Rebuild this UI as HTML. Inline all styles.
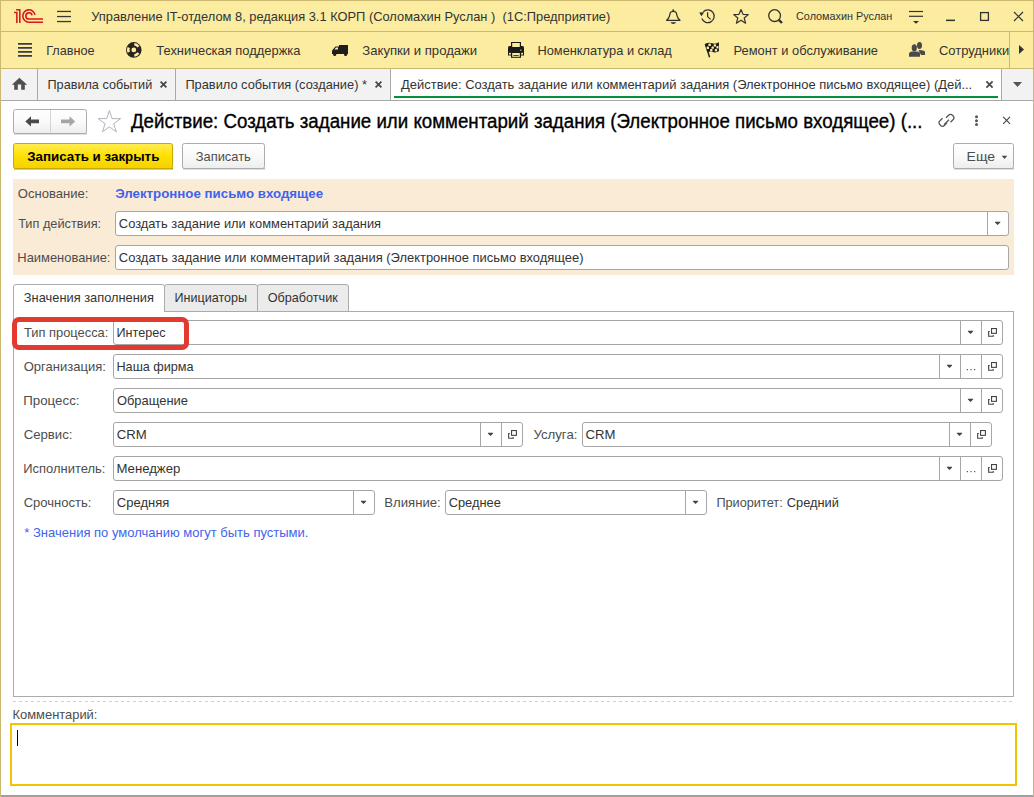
<!DOCTYPE html>
<html><head><meta charset="utf-8"><title>1C</title>
<style>
html,body{margin:0;padding:0;background:#fff;overflow:hidden;}
svg{display:block;font-family:"Liberation Sans", sans-serif;}
text{white-space:pre;}
</style></head>
<body>
<svg width="1034" height="797" viewBox="0 0 1034 797">
<rect x="0" y="0" width="1034" height="797" fill="#FFFFFF"/>
<rect x="0" y="0" width="1034" height="68" fill="#FBEC9F"/>
<rect x="0" y="31" width="1034" height="1" fill="#CBB871"/>
<rect x="0" y="68" width="1034" height="1" fill="#CBB871"/>
<rect x="0" y="69" width="1034" height="31" fill="#F2F2F2"/>
<rect x="0" y="100" width="1034" height="1" fill="#A9A9A9"/>
<g fill="none" stroke="#D8161C" stroke-width="1.55">
<path d="M14.1 12.55 H16.85 V22.9"/>
<path d="M16.1 9.75 H19.8 V22.9"/>
<path d="M43 22.15 H28.9 A6.15 6.15 0 1 1 35 14.9"/>
<path d="M43 19.05 H28.9 A3.1 3.1 0 1 1 32 15.4"/>
</g>
<g fill="#3A3A3A"><rect x="57" y="10.8" width="14" height="1.3"/><rect x="57" y="15.9" width="14" height="1.3"/><rect x="57" y="20.9" width="14" height="1.3"/></g>
<text x="91.21" y="21" font-size="13.5" fill="#333333" font-weight="normal" textLength="519.10" lengthAdjust="spacingAndGlyphs" xml:space="preserve" >Управление IT-отделом 8, редакция 3.1 КОРП (Соломахин Руслан )  (1С:Предприятие)</text>
<path d="M666.6 20.3 Q668.6 18.6 669.4 16.2 L670.3 12.8 Q670.8 11.4 673.3 11.4 Q675.8 11.4 676.3 12.8 L677.2 16.2 Q678 18.6 680 20.3 Z" fill="none" stroke="#2E2E2E" stroke-width="1.25" stroke-linejoin="round"/>
<circle cx="673.3" cy="10.2" r="0.95" fill="#2E2E2E"/>
<path d="M670.4 22.2 H676.2 Q675.2 23.9 673.3 23.9 Q671.4 23.9 670.4 22.2 Z" fill="#2E2E2E"/>
<g fill="none" stroke="#2E2E2E" stroke-width="1.25">
<path d="M703.3 11.7 A6.4 6.4 0 1 1 701.8 18.6"/>
<path d="M707.6 12.2 V16.6 L710.6 19.4"/>
</g>
<path d="M699.2 12.5 L704.2 12.3 L701.4 16.2 Z" fill="#2E2E2E"/>
<path d="M741 9.5 L743 14.3 L748.3 14.6 L744.2 18 L745.6 23.2 L741 20.3 L736.4 23.2 L737.8 18 L733.7 14.6 L739 14.3 Z" fill="none" stroke="#333" stroke-width="1.2" stroke-linejoin="round"/>
<circle cx="774.6" cy="15.6" r="5.9" fill="none" stroke="#333" stroke-width="1.3"/>
<path d="M778.8 19.8 L782 23" stroke="#333" stroke-width="2.4"/>
<text x="796.06" y="20" font-size="11" fill="#333333" font-weight="normal" textLength="96.27" lengthAdjust="spacingAndGlyphs" xml:space="preserve" >Соломахин Руслан</text>
<g fill="#333"><rect x="909" y="10.9" width="14" height="1.2"/><rect x="909" y="15.7" width="14" height="1.2"/>
<path d="M913 21 H919 L916 23.7 Z"/></g>
<rect x="946" y="19.6" width="9" height="1.5" fill="#333"/>
<rect x="980.6" y="12.6" width="7.8" height="7.8" fill="none" stroke="#333" stroke-width="1.3"/>
<path d="M1014 12 L1023 21 M1023 12 L1014 21" stroke="#333" stroke-width="1.2"/>
<g fill="#3A3A48"><rect x="18" y="43" width="14" height="1.75"/><rect x="18" y="47" width="14" height="1.75"/><rect x="18" y="51" width="14" height="1.75"/><rect x="18" y="55" width="14" height="1.75"/></g>
<text x="46.19" y="55" font-size="13.5" fill="#333333" font-weight="normal" textLength="48.39" lengthAdjust="spacingAndGlyphs" xml:space="preserve" >Главное</text>
<g transform="translate(133.8 49.9)">
<circle r="7.8" fill="#2A2320"/>
<circle r="2.4" fill="#FBEC9F"/>
<g fill="#FBEC9F">
<path d="M-6.25 -2.92 A6.9 6.9 0 0 0 -6.25 2.92 L-3.9 1.82 A4.3 4.3 0 0 1 -3.9 -1.82 Z"/>
<path d="M-6.25 -2.92 A6.9 6.9 0 0 0 -6.25 2.92 L-3.9 1.82 A4.3 4.3 0 0 1 -3.9 -1.82 Z" transform="rotate(120)"/>
<path d="M-6.25 -2.92 A6.9 6.9 0 0 0 -6.25 2.92 L-3.9 1.82 A4.3 4.3 0 0 1 -3.9 -1.82 Z" transform="rotate(240)"/>
</g></g>
<text x="156.34" y="55" font-size="13.5" fill="#333333" font-weight="normal" textLength="144.08" lengthAdjust="spacingAndGlyphs" xml:space="preserve" >Техническая поддержка</text>
<g fill="#1E1E1E">
<rect x="339" y="45" width="9" height="9"/>
<path d="M332 54 V50.5 L335.5 46.5 H339.5 V54 Z"/>
<circle cx="334.7" cy="54.5" r="1.6"/><circle cx="345.6" cy="54.5" r="1.6"/>
</g>
<path d="M334.3 49.5 L336 47.6 H338 V49.5 Z" fill="#FBEC9F"/>
<text x="362.34" y="55" font-size="13.5" fill="#333333" font-weight="normal" textLength="114.87" lengthAdjust="spacingAndGlyphs" xml:space="preserve" >Закупки и продажи</text>
<g fill="#1A1A1A">
<rect x="511" y="42" width="10" height="6"/>
<path d="M508 47.5 Q508 46 509.5 46 H522.5 Q524 46 524 47.5 V55.5 H508 Z"/>
<rect x="511" y="52" width="10" height="5.8"/>
</g>
<rect x="512.2" y="43" width="7.6" height="4" fill="#FBEC9F"/>
<rect x="512.2" y="53" width="7.6" height="3.8" fill="#FBEC9F"/>
<rect x="509" y="52.8" width="1.8" height="1.8" fill="#FBEC9F"/><rect x="521.2" y="52.8" width="1.8" height="1.8" fill="#FBEC9F"/>
<rect x="513.3" y="55" width="5.4" height="0.8" fill="#1A1A1A"/>
<rect x="520" y="49.5" width="1.5" height="1.5" fill="#9A9070"/>
<text x="537.48" y="55" font-size="13.5" fill="#333333" font-weight="normal" textLength="134.35" lengthAdjust="spacingAndGlyphs" xml:space="preserve" >Номенклатура и склад</text>
<g>
<path d="M705.1 44 Q708.5 41.8 712 43.3 Q715.5 44.6 718.9 42.3 V51.3 Q715.5 53.3 712.3 51.8 Q710 50.8 708.3 52.2 Z" fill="#1A1A1A"/>
<path d="M705.3 44 L709.6 57.3" stroke="#1A1A1A" stroke-width="1.4"/>
<g fill="#FBEC9F">
<rect x="708.4" y="43.5" width="2.5" height="2.5" rx="0.6"/><rect x="713.7" y="44.2" width="2.4" height="2.4" rx="0.6"/>
<rect x="706.7" y="46.6" width="2.3" height="2.5" rx="0.6"/><rect x="711.5" y="46.4" width="2.4" height="2.4" rx="0.6"/><rect x="716.4" y="46.1" width="2.1" height="2.4" rx="0.6"/>
<rect x="710.1" y="49.1" width="2.4" height="2.3" rx="0.6"/><rect x="714.8" y="49.1" width="2.3" height="2.3" rx="0.6"/>
</g></g>
<text x="733.57" y="55" font-size="13.5" fill="#333333" font-weight="normal" textLength="144.42" lengthAdjust="spacingAndGlyphs" xml:space="preserve" >Ремонт и обслуживание</text>
<g fill="#4A4A4A">
<ellipse cx="919.5" cy="45.5" rx="2.5" ry="3.4"/>
<path d="M918.5 50 Q923 49.5 925 51.5 V55 H921 Z"/>
<ellipse cx="914.3" cy="47.8" rx="2.6" ry="3.6"/>
<path d="M909 53.5 Q909.5 51.5 912 51.5 H917 Q920 51.5 920 53.5 V56.7 H909 Z"/>
</g>
<text x="938.95" y="55" font-size="13.5" fill="#333333" font-weight="normal" textLength="70.21" lengthAdjust="spacingAndGlyphs" xml:space="preserve" >Сотрудники</text>
<rect x="1009" y="32" width="1" height="36" fill="#CBB871"/>
<path d="M1019 45 L1024 49.5 L1019 54 Z" fill="#333"/>
<path d="M19.4 77.8 L27.1 84.7 H24.8 V89.8 H21.2 V84.5 H17.8 V89.8 H14.2 V84.7 H11.9 Z" fill="#4F4F4F"/>
<rect x="37" y="69" width="1" height="31" fill="#A9A9A9"/>
<text x="47.49" y="89" font-size="13.5" fill="#333333" font-weight="normal" textLength="104.77" lengthAdjust="spacingAndGlyphs" xml:space="preserve" >Правила событий</text>
<path d="M160.6 81.6 L166.4 87.4 M166.4 81.6 L160.6 87.4" stroke="#4A4A4A" stroke-width="1.8"/>
<rect x="175" y="69" width="1" height="31" fill="#A9A9A9"/>
<text x="185.38" y="89" font-size="13.5" fill="#333333" font-weight="normal" textLength="181.58" lengthAdjust="spacingAndGlyphs" xml:space="preserve" >Правило события (создание) *</text>
<path d="M375.6 81.6 L381.4 87.4 M381.4 81.6 L375.6 87.4" stroke="#4A4A4A" stroke-width="1.8"/>
<rect x="390" y="69" width="1" height="31" fill="#A9A9A9"/>
<rect x="391" y="69" width="610" height="31" fill="#FFFFFF"/>
<text x="401.04" y="89" font-size="13.5" fill="#333333" font-weight="normal" textLength="571.15" lengthAdjust="spacingAndGlyphs" xml:space="preserve" >Действие: Создать задание или комментарий задания (Электронное письмо входящее) (Дей...</text>
<path d="M986.4 81.4 L992.6 87.6 M992.6 81.4 L986.4 87.6" stroke="#4A4A4A" stroke-width="1.8"/>
<rect x="394" y="96" width="604" height="2" fill="#00923F"/>
<rect x="1001" y="69" width="1" height="31" fill="#A9A9A9"/>
<path d="M1013 82 H1022 L1017.5 87 Z" fill="#555"/>
<defs>
<linearGradient id="gbtn" x1="0" y1="0" x2="0" y2="1"><stop offset="0" stop-color="#FFFFFF"/><stop offset="0.5" stop-color="#FAFAFA"/><stop offset="1" stop-color="#EDEDED"/></linearGradient>
<linearGradient id="gyel" x1="0" y1="0" x2="0" y2="1"><stop offset="0" stop-color="#FFED55"/><stop offset="0.5" stop-color="#FFE000"/><stop offset="1" stop-color="#F3D200"/></linearGradient>
</defs>
<rect x="14" y="133" width="73" height="1.5" fill="#BDBDBD"/>
<rect x="13.5" y="109.5" width="73" height="24" rx="2" fill="url(#gbtn)" stroke="#ACACAC" stroke-width="1" />
<rect x="50" y="110" width="1" height="23" fill="#D4D4D4"/>
<path d="M25.3 121.4 L31 116.2 V119.6 H39 V123.2 H31 V126.6 Z" fill="#4A4A4A"/>
<path d="M75.2 121.4 L69.5 116.2 V119.6 H61 V123.2 H69.5 V126.6 Z" fill="#A6A6A6"/>
<path d="M109.40 110.45 L112.06 118.64 L120.67 118.64 L113.71 123.70 L116.37 131.89 L109.40 126.83 L102.43 131.89 L105.09 123.70 L98.13 118.64 L106.74 118.64 Z" fill="none" stroke="#AFB5BC" stroke-width="1" stroke-linejoin="round"/>
<text x="130.91" y="128" font-size="19.5" fill="#000000" font-weight="normal" textLength="791.57" lengthAdjust="spacingAndGlyphs" xml:space="preserve" stroke="#000" stroke-width="0.35">Действие: Создать задание или комментарий задания (Электронное письмо входящее) (...</text>
<g fill="none" stroke="#555" stroke-width="1.3" transform="translate(0 1.3)">
<path d="M946 116.5 L948.5 114 A2.5 2.5 0 0 1 952.5 114 L953 114.5 A2.5 2.5 0 0 1 953 118.5 L950.5 121"/>
<path d="M947 121.5 L944.5 124 A2.5 2.5 0 0 1 940.5 124 L940 123.5 A2.5 2.5 0 0 1 940 119.5 L942.5 117"/>
<path d="M944 123.5 L949 118.5" />
</g>
<g fill="#555"><circle cx="976.5" cy="116.8" r="1.5"/><circle cx="976.5" cy="120.7" r="1.5"/><circle cx="976.5" cy="124.6" r="1.5"/></g>
<path d="M1003.2 116.8 L1010 123.8 M1010 116.8 L1003.2 123.8" stroke="#444" stroke-width="1.1"/>
<rect x="14" y="168" width="159" height="1.5" fill="#B89A00"/>
<rect x="13.5" y="143.5" width="159" height="25" rx="2" fill="url(#gyel)" stroke="#C9A800" stroke-width="1" />
<text x="27.17" y="161" font-size="13.5" fill="#000000" font-weight="bold" textLength="132.18" lengthAdjust="spacingAndGlyphs" xml:space="preserve" >Записать и закрыть</text>
<rect x="183" y="168" width="82" height="1.5" fill="#BDBDBD"/>
<rect x="182.5" y="143.5" width="82" height="25" rx="2" fill="url(#gbtn)" stroke="#ACACAC" stroke-width="1" />
<text x="195.75" y="161" font-size="13.5" fill="#4D4D4D" font-weight="normal" textLength="55.05" lengthAdjust="spacingAndGlyphs" xml:space="preserve" >Записать</text>
<rect x="954" y="168" width="60" height="1.5" fill="#BDBDBD"/>
<rect x="953.5" y="143.5" width="60" height="25" rx="2" fill="url(#gbtn)" stroke="#ACACAC" stroke-width="1" />
<text x="966.58" y="161" font-size="13.5" fill="#4D4D4D" font-weight="normal" textLength="28.44" lengthAdjust="spacingAndGlyphs" xml:space="preserve" >Еще</text>
<path d="M1001.8 155.8 H1007.2 L1004.5 159 Z" fill="#444"/>
<rect x="13" y="179" width="1001" height="96" fill="#FAEBD7"/>
<text x="17.81" y="198" font-size="13.5" fill="#4D4D4D" font-weight="normal" textLength="70.59" lengthAdjust="spacingAndGlyphs" xml:space="preserve" >Основание:</text>
<text x="115.17" y="198" font-size="13.5" fill="#3F63EC" font-weight="bold" textLength="207.93" lengthAdjust="spacingAndGlyphs" xml:space="preserve" >Электронное письмо входящее</text>
<text x="18.14" y="228" font-size="13.5" fill="#4D4D4D" font-weight="normal" textLength="83.01" lengthAdjust="spacingAndGlyphs" xml:space="preserve" >Тип действия:</text>
<rect x="115.5" y="211.5" width="893" height="24" rx="2.5" fill="#FFFFFF" stroke="#A6A6A6" stroke-width="1" />
<rect x="987" y="212" width="1" height="23" fill="#A6A6A6"/>
<path d="M995 221.8 H1000.3 V222.5 L997.65 225 L995 222.5 Z" fill="#444"/>
<text x="118.86" y="228" font-size="13.5" fill="#333333" font-weight="normal" textLength="262.18" lengthAdjust="spacingAndGlyphs" xml:space="preserve" >Создать задание или комментарий задания</text>
<text x="17.37" y="262" font-size="13.5" fill="#4D4D4D" font-weight="normal" textLength="93.06" lengthAdjust="spacingAndGlyphs" xml:space="preserve" >Наименование:</text>
<rect x="115.5" y="245.5" width="893" height="24" rx="2.5" fill="#FFFFFF" stroke="#A6A6A6" stroke-width="1" />
<text x="118.85" y="262" font-size="13.5" fill="#333333" font-weight="normal" textLength="464.67" lengthAdjust="spacingAndGlyphs" xml:space="preserve" >Создать задание или комментарий задания (Электронное письмо входящее)</text>
<path d="M164.5 311.5 V287 Q164.5 284.5 167 284.5 H255 Q257.5 284.5 257.5 287 V311.5 Z" fill="#EBEBEB" stroke="#ABABAB" stroke-width="1"/>
<path d="M257.5 311.5 V287 Q257.5 284.5 260 284.5 H346 Q348.5 284.5 348.5 287 V311.5 Z" fill="#EBEBEB" stroke="#ABABAB" stroke-width="1"/>
<rect x="13.5" y="311.5" width="1000" height="385" rx="0" fill="#FFFFFF" stroke="#ABABAB" stroke-width="1" />
<path d="M13.5 312 V287 Q13.5 284.5 16 284.5 H162 Q164.5 284.5 164.5 287 V312" fill="#FFFFFF" stroke="#ABABAB" stroke-width="1"/>
<rect x="14" y="311" width="150" height="1" fill="#FFFFFF"/>
<text x="23.85" y="302" font-size="13.5" fill="#333333" font-weight="normal" textLength="130.12" lengthAdjust="spacingAndGlyphs" xml:space="preserve" >Значения заполнения</text>
<text x="174.49" y="302" font-size="13.5" fill="#333333" font-weight="normal" textLength="72.56" lengthAdjust="spacingAndGlyphs" xml:space="preserve" >Инициаторы</text>
<text x="267.63" y="302" font-size="13.5" fill="#333333" font-weight="normal" textLength="70.21" lengthAdjust="spacingAndGlyphs" xml:space="preserve" >Обработчик</text>
<text x="24.04" y="337" font-size="13.5" fill="#4D4D4D" font-weight="normal" textLength="84.32" lengthAdjust="spacingAndGlyphs" xml:space="preserve" >Тип процесса:</text>
<rect x="113.5" y="320.5" width="889" height="24" rx="2.5" fill="#FFFFFF" stroke="#A6A6A6" stroke-width="1" />
<rect x="981" y="321" width="1" height="23" fill="#A6A6A6"/>
<g fill="none" stroke="#444" stroke-width="1.1"><path d="M989.8 331.5 H988.65 V336.25 H993.25 V335"/><rect x="991.55" y="328.55" width="4.85" height="4.8"/></g>
<rect x="960" y="321" width="1" height="23" fill="#A6A6A6"/>
<path d="M967.9 330.8 H973.1 V331.5 L970.5 334 L967.9 331.5 Z" fill="#444"/>
<text x="116.49" y="337" font-size="13.5" fill="#333333" font-weight="normal" textLength="49.04" lengthAdjust="spacingAndGlyphs" xml:space="preserve" >Интерес</text>
<text x="23.71" y="371" font-size="13.5" fill="#4D4D4D" font-weight="normal" textLength="82.21" lengthAdjust="spacingAndGlyphs" xml:space="preserve" >Организация:</text>
<rect x="113.5" y="354.5" width="889" height="24" rx="2.5" fill="#FFFFFF" stroke="#A6A6A6" stroke-width="1" />
<rect x="981" y="355" width="1" height="23" fill="#A6A6A6"/>
<g fill="none" stroke="#444" stroke-width="1.1"><path d="M989.8 365.5 H988.65 V370.25 H993.25 V369"/><rect x="991.55" y="362.55" width="4.85" height="4.8"/></g>
<rect x="960" y="355" width="1" height="23" fill="#A6A6A6"/>
<g fill="#555"><rect x="966.8" y="369" width="1.2" height="1.2"/><rect x="970.4" y="369" width="1.2" height="1.2"/><rect x="974" y="369" width="1.2" height="1.2"/></g>
<rect x="939" y="355" width="1" height="23" fill="#A6A6A6"/>
<path d="M946.9 364.8 H952.1 V365.5 L949.5 368 L946.9 365.5 Z" fill="#444"/>
<text x="116.49" y="371" font-size="13.5" fill="#333333" font-weight="normal" textLength="77.12" lengthAdjust="spacingAndGlyphs" xml:space="preserve" >Наша фирма</text>
<text x="23.23" y="405" font-size="13.5" fill="#4D4D4D" font-weight="normal" textLength="56.28" lengthAdjust="spacingAndGlyphs" xml:space="preserve" >Процесс:</text>
<rect x="113.5" y="388.5" width="889" height="24" rx="2.5" fill="#FFFFFF" stroke="#A6A6A6" stroke-width="1" />
<rect x="981" y="389" width="1" height="23" fill="#A6A6A6"/>
<g fill="none" stroke="#444" stroke-width="1.1"><path d="M989.8 399.5 H988.65 V404.25 H993.25 V403"/><rect x="991.55" y="396.55" width="4.85" height="4.8"/></g>
<rect x="960" y="389" width="1" height="23" fill="#A6A6A6"/>
<path d="M967.9 398.8 H973.1 V399.5 L970.5 402 L967.9 399.5 Z" fill="#444"/>
<text x="116.92" y="405" font-size="13.5" fill="#333333" font-weight="normal" textLength="71.00" lengthAdjust="spacingAndGlyphs" xml:space="preserve" >Обращение</text>
<text x="23.64" y="439" font-size="13.5" fill="#4D4D4D" font-weight="normal" textLength="48.88" lengthAdjust="spacingAndGlyphs" xml:space="preserve" >Сервис:</text>
<rect x="113.5" y="422.5" width="409" height="24" rx="2.5" fill="#FFFFFF" stroke="#A6A6A6" stroke-width="1" />
<rect x="501" y="423" width="1" height="23" fill="#A6A6A6"/>
<g fill="none" stroke="#444" stroke-width="1.1"><path d="M509.8 433.5 H508.65 V438.25 H513.25 V437"/><rect x="511.55" y="430.55" width="4.85" height="4.8"/></g>
<rect x="480" y="423" width="1" height="23" fill="#A6A6A6"/>
<path d="M487.9 432.8 H493.1 V433.5 L490.5 436 L487.9 433.5 Z" fill="#444"/>
<text x="116.84" y="439" font-size="13.5" fill="#333333" font-weight="normal" textLength="29.94" lengthAdjust="spacingAndGlyphs" xml:space="preserve" >CRM</text>
<text x="533.40" y="439" font-size="13.5" fill="#4D4D4D" font-weight="normal" textLength="44.04" lengthAdjust="spacingAndGlyphs" xml:space="preserve" >Услуга:</text>
<rect x="582.5" y="422.5" width="409" height="24" rx="2.5" fill="#FFFFFF" stroke="#A6A6A6" stroke-width="1" />
<rect x="970" y="423" width="1" height="23" fill="#A6A6A6"/>
<g fill="none" stroke="#444" stroke-width="1.1"><path d="M978.8 433.5 H977.65 V438.25 H982.25 V437"/><rect x="980.55" y="430.55" width="4.85" height="4.8"/></g>
<rect x="949" y="423" width="1" height="23" fill="#A6A6A6"/>
<path d="M956.9 432.8 H962.1 V433.5 L959.5 436 L956.9 433.5 Z" fill="#444"/>
<text x="585.54" y="439" font-size="13.5" fill="#333333" font-weight="normal" textLength="29.94" lengthAdjust="spacingAndGlyphs" xml:space="preserve" >CRM</text>
<text x="23.26" y="473" font-size="13.5" fill="#4D4D4D" font-weight="normal" textLength="82.11" lengthAdjust="spacingAndGlyphs" xml:space="preserve" >Исполнитель:</text>
<rect x="113.5" y="456.5" width="889" height="24" rx="2.5" fill="#FFFFFF" stroke="#A6A6A6" stroke-width="1" />
<rect x="981" y="457" width="1" height="23" fill="#A6A6A6"/>
<g fill="none" stroke="#444" stroke-width="1.1"><path d="M989.8 467.5 H988.65 V472.25 H993.25 V471"/><rect x="991.55" y="464.55" width="4.85" height="4.8"/></g>
<rect x="960" y="457" width="1" height="23" fill="#A6A6A6"/>
<g fill="#555"><rect x="966.8" y="471" width="1.2" height="1.2"/><rect x="970.4" y="471" width="1.2" height="1.2"/><rect x="974" y="471" width="1.2" height="1.2"/></g>
<rect x="939" y="457" width="1" height="23" fill="#A6A6A6"/>
<path d="M946.9 466.8 H952.1 V467.5 L949.5 470 L946.9 467.5 Z" fill="#444"/>
<text x="116.45" y="473" font-size="13.5" fill="#333333" font-weight="normal" textLength="63.90" lengthAdjust="spacingAndGlyphs" xml:space="preserve" >Менеджер</text>
<text x="23.65" y="507" font-size="13.5" fill="#4D4D4D" font-weight="normal" textLength="67.67" lengthAdjust="spacingAndGlyphs" xml:space="preserve" >Срочность:</text>
<rect x="113.5" y="490.5" width="261" height="24" rx="2.5" fill="#FFFFFF" stroke="#A6A6A6" stroke-width="1" />
<rect x="353" y="491" width="1" height="23" fill="#A6A6A6"/>
<path d="M360.9 500.8 H366.1 V501.5 L363.5 504 L360.9 501.5 Z" fill="#444"/>
<text x="116.85" y="507" font-size="13.5" fill="#333333" font-weight="normal" textLength="52.52" lengthAdjust="spacingAndGlyphs" xml:space="preserve" >Средняя</text>
<text x="384.35" y="507" font-size="13.5" fill="#4D4D4D" font-weight="normal" textLength="56.44" lengthAdjust="spacingAndGlyphs" xml:space="preserve" >Влияние:</text>
<rect x="445.5" y="490.5" width="261" height="24" rx="2.5" fill="#FFFFFF" stroke="#A6A6A6" stroke-width="1" />
<rect x="685" y="491" width="1" height="23" fill="#A6A6A6"/>
<path d="M692.9 500.8 H698.1 V501.5 L695.5 504 L692.9 501.5 Z" fill="#444"/>
<text x="448.66" y="507" font-size="13.5" fill="#333333" font-weight="normal" textLength="52.13" lengthAdjust="spacingAndGlyphs" xml:space="preserve" >Среднее</text>
<text x="716.38" y="507" font-size="13.5" fill="#4D4D4D" font-weight="normal" textLength="66.33" lengthAdjust="spacingAndGlyphs" xml:space="preserve" >Приоритет:</text>
<text x="786.76" y="507" font-size="13.5" fill="#333333" font-weight="normal" textLength="52.15" lengthAdjust="spacingAndGlyphs" xml:space="preserve" >Средний</text>
<text x="24.30" y="537" font-size="13.5" fill="#3F63EC" font-weight="normal" textLength="284.09" lengthAdjust="spacingAndGlyphs" xml:space="preserve" >* Значения по умолчанию могут быть пустыми.</text>
<rect x="14.5" y="319.5" width="172" height="28" rx="4.5" fill="none" stroke="#E23A2F" stroke-width="5"/>
<line x1="13" y1="701.5" x2="1013" y2="701.5" stroke="#D0D0D0" stroke-width="1" stroke-dasharray="3 3"/>
<text x="12.57" y="719" font-size="13.5" fill="#4D4D4D" font-weight="normal" textLength="84.81" lengthAdjust="spacingAndGlyphs" xml:space="preserve" >Комментарий:</text>
<rect x="11" y="724" width="1005" height="61" fill="#FFFFFF" stroke="#F5C400" stroke-width="2"/>
<rect x="17" y="730" width="1" height="16" fill="#000"/>
<rect x="0" y="0" width="1034" height="1" fill="#CBB871"/>
<rect x="0" y="0" width="1" height="797" fill="#CBB871"/>
<rect x="1033" y="0" width="1" height="797" fill="#CBB871"/>
<rect x="1" y="795" width="1032" height="2" fill="#A0A0A0"/>
</svg>
</body></html>
